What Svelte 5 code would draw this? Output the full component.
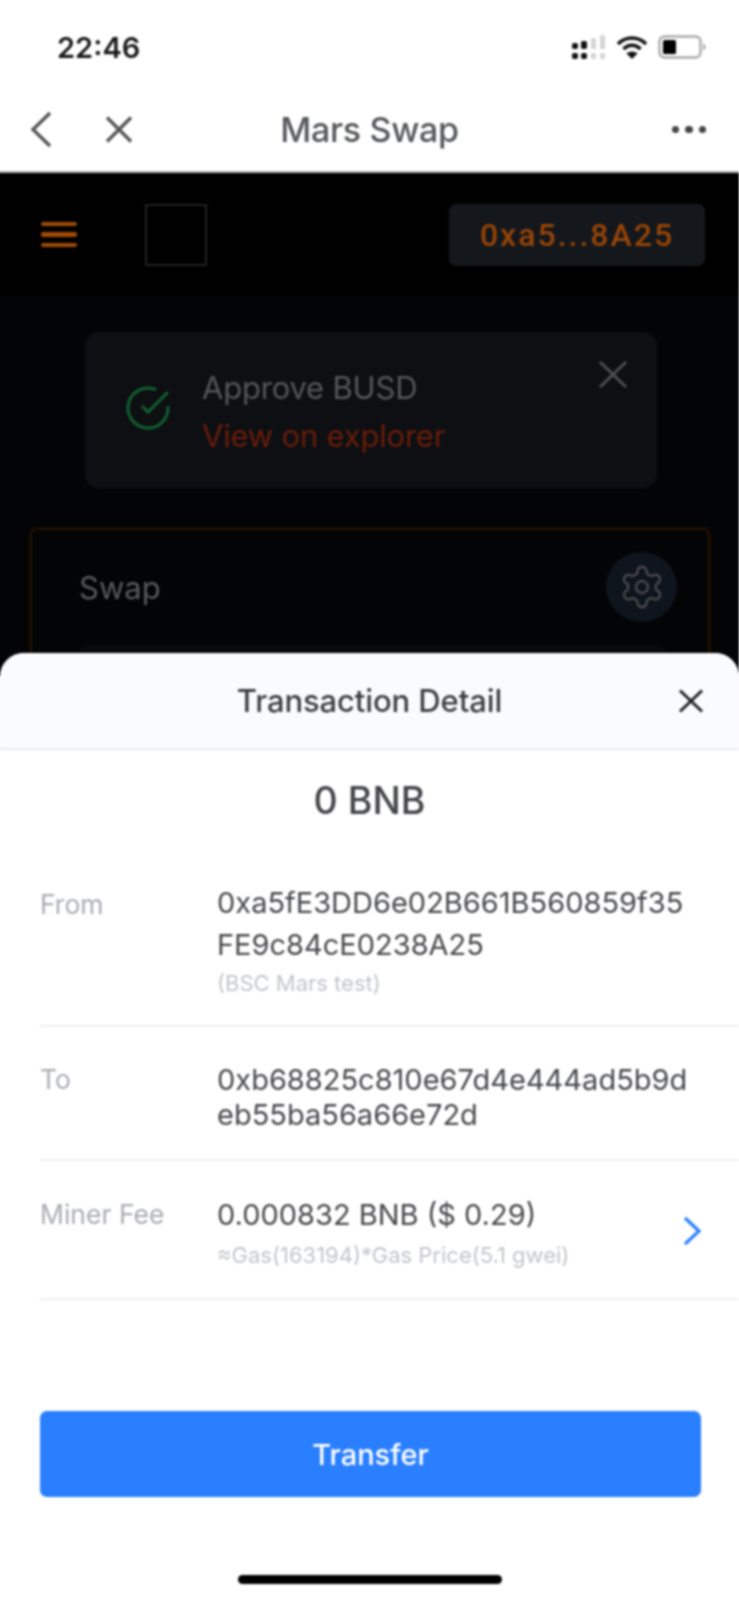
<script lang="ts">
const rows = [
  { label: 'To', lines: ['0xb68825c810e67d4e444ad5b9d', 'eb55ba56a66e72d'] },
];
</script>

<div class="phone">
  <header class="status">
    <span class="time">22:46</span>
    <div class="status-icons">
      <svg width="34" height="24" viewBox="0 0 34 24" aria-hidden="true">
        <g fill="#111">
          <rect x="0" y="8" width="6" height="6" rx="2" />
          <rect x="9" y="6" width="6" height="8" rx="2" />
          <rect x="0" y="18" width="6" height="6" rx="2" />
          <rect x="9" y="18" width="6" height="6" rx="2" />
        </g>
        <g fill="#d4d4d4">
          <rect x="19" y="3" width="5" height="11" rx="1.5" />
          <rect x="28" y="0" width="5" height="14" rx="1.5" />
          <rect x="19" y="18" width="5" height="6" rx="1.5" />
          <rect x="28" y="18" width="5" height="6" rx="1.5" />
        </g>
      </svg>
      <svg width="32" height="24" viewBox="0 0 32 24" aria-hidden="true">
        <g fill="none" stroke="#111" stroke-width="3.6">
          <path d="M2 9 C10 1 22 1 30 9" />
          <path d="M7.5 14 C12.5 9 19.5 9 24.5 14" />
        </g>
        <path d="M16 24 L10.5 18.5 C13.5 15.8 18.5 15.8 21.5 18.5 Z" fill="#111" />
      </svg>
      <svg width="48" height="24" viewBox="0 0 48 24" aria-hidden="true">
        <rect x="1.5" y="1.5" width="41" height="21" rx="5" fill="none" stroke="#aaa" stroke-width="2.4" />
        <rect x="5" y="5" width="13" height="14" rx="1.5" fill="#000" />
        <path d="M45 8.5 C47 9.5 47.5 10.5 47.5 12 C47.5 13.5 47 14.5 45 15.5 Z" fill="#aaa" />
      </svg>
    </div>
  </header>

  <nav class="nav">
    <div class="nav-left">
      <svg width="22" height="37" viewBox="0 0 22 37" aria-hidden="true">
        <path d="M20 2 L3 18.5 L20 35" fill="none" stroke="#555" stroke-width="3.4" />
      </svg>
      <svg width="28" height="27" viewBox="0 0 28 27" aria-hidden="true">
        <path d="M2 1.5 L26 25.5 M26 1.5 L2 25.5" fill="none" stroke="#555" stroke-width="3.4" />
      </svg>
    </div>
    <span class="nav-title">Mars Swap</span>
    <div class="dots"><i></i><i></i><i></i></div>
  </nav>

  <div class="appbar">
    <div class="burger"><i></i><i></i><i></i></div>
    <div class="logo-box"></div>
    <div class="address">0xa5...8A25</div>
  </div>

  <main class="page">
    <div class="toast">
      <svg class="check" width="48" height="48" viewBox="0 0 24 24" aria-hidden="true">
        <path d="M22 11.08V12a10 10 0 1 1-5.93-9.14" fill="none" stroke="#11602f" stroke-width="1.5" />
        <path d="M22 4 12 14.01 9 11.01" fill="none" stroke="#11602f" stroke-width="1.5" />
      </svg>
      <div class="toast-text">
        <div class="toast-title">Approve BUSD</div>
        <div class="toast-link">View on explorer</div>
      </div>
      <svg class="toast-close" width="30" height="29" viewBox="0 0 30 29" aria-hidden="true">
        <path d="M2 2 L28 27 M28 2 L2 27" fill="none" stroke="#4e4e4e" stroke-width="3" />
      </svg>
    </div>

    <section class="swap">
      <div class="swap-head">
        <span>Swap</span>
        <div class="gear">
          <svg width="48" height="48" viewBox="0 0 24 24" aria-hidden="true">
            <path d="M12.22 2h-.44a2 2 0 0 0-2 2v.18a2 2 0 0 1-1 1.73l-.43.25a2 2 0 0 1-2 0l-.15-.08a2 2 0 0 0-2.73.73l-.22.38a2 2 0 0 0 .73 2.73l.15.1a2 2 0 0 1 1 1.72v.51a2 2 0 0 1-1 1.74l-.15.09a2 2 0 0 0-.73 2.73l.22.38a2 2 0 0 0 2.73.73l.15-.08a2 2 0 0 1 2 0l.43.25a2 2 0 0 1 1 1.73V20a2 2 0 0 0 2 2h.44a2 2 0 0 0 2-2v-.18a2 2 0 0 1 1-1.73l.43-.25a2 2 0 0 1 2 0l.15.08a2 2 0 0 0 2.73-.73l.22-.39a2 2 0 0 0-.73-2.73l-.15-.08a2 2 0 0 1-1-1.74v-.5a2 2 0 0 1 1-1.74l.15-.09a2 2 0 0 0 .73-2.73l-.22-.38a2 2 0 0 0-2.73-.73l-.15.08a2 2 0 0 1-2 0l-.43-.25a2 2 0 0 1-1-1.73V4a2 2 0 0 0-2-2z" fill="none" stroke="#4a4a4c" stroke-width="1.2" />
            <circle cx="12" cy="12" r="3" fill="none" stroke="#4a4a4c" stroke-width="1.2" />
          </svg>
        </div>
      </div>
      <div class="swap-panel"></div>
    </section>
  </main>

  <aside class="sheet">
    <div class="sheet-head">
      <span>Transaction Detail</span>
      <svg class="sheet-close" width="26" height="24" viewBox="0 0 26 24" aria-hidden="true">
        <path d="M2 1.5 L24 22.5 M24 1.5 L2 22.5" fill="none" stroke="#222" stroke-width="3" />
      </svg>
    </div>

    <div class="amount">0 BNB</div>

    <div class="row row-from">
      <div class="label">From</div>
      <div class="value">
        <div>0xa5fE3DD6e02B661B560859f35</div>
        <div>FE9c84cE0238A25</div>
        <div class="sub">(BSC Mars test)</div>
      </div>
    </div>

    {#each rows as row}
      <div class="row row-to">
        <div class="label">{row.label}</div>
        <div class="value">
          {#each row.lines as line}
            <div>{line}</div>
          {/each}
        </div>
      </div>
    {/each}

    <div class="row row-fee">
      <div class="label">Miner Fee</div>
      <div class="value">
        <div>0.000832 BNB ($ 0.29)</div>
        <div class="sub">≈Gas(163194)*Gas Price(5.1 gwei)</div>
      </div>
      <svg class="more" width="20" height="30" viewBox="0 0 20 30" aria-hidden="true">
        <path d="M3 2 L17 15 L3 28" fill="none" stroke="#2a7fff" stroke-width="3.2" />
      </svg>
    </div>

    <button type="button" class="transfer">Transfer</button>
    <div class="home-bar"></div>
  </aside>
</div>

<style>
  :global(body) {
    margin: 0;
    background: #fff;
    overflow: hidden;
  }

  /* 4px wider than the window on the left so the blur doesn't fade the left edge */
  .phone {
    position: relative;
    width: 743px;
    height: 1600px;
    margin-left: -4px;
    overflow: hidden;
    background: #fff;
    font-family: Inter, "Noto Sans", sans-serif;
    filter: blur(0.9px);
  }

  .status {
    display: flex;
    align-items: center;
    justify-content: space-between;
    height: 88px;
    box-sizing: border-box;
    padding: 6px 33px 0 61px;
  }

  .time {
    font-size: 29px;
    font-weight: 600;
    color: #1a1a1a;
  }

  .status-icons {
    display: flex;
    align-items: center;
    gap: 10px;
  }

  .nav {
    position: relative;
    display: flex;
    align-items: center;
    justify-content: space-between;
    height: 85px;
    box-sizing: border-box;
    padding: 0 33px 0 34px;
    border-bottom: 2px solid #b4b4b4;
  }

  .nav-left {
    display: flex;
    align-items: center;
    gap: 53px;
  }

  .nav-title {
    position: absolute;
    left: 4px;
    right: 0;
    text-align: center;
    font-size: 34px;
    font-weight: 500;
    color: #55575a;
    letter-spacing: -0.3px;
  }

  .dots {
    display: flex;
    gap: 6px;
  }

  .dots i {
    width: 7.5px;
    height: 7.5px;
    border-radius: 50%;
    background: #444;
  }

  .appbar {
    display: flex;
    align-items: center;
    height: 123px;
    box-sizing: border-box;
    padding: 0 34px 0 45px;
    background: #000;
  }

  .burger {
    display: flex;
    flex-direction: column;
    gap: 6px;
    width: 36px;
  }

  .burger i {
    height: 4.5px;
    border-radius: 2px;
    background: #a04a08;
  }

  .logo-box {
    width: 58px;
    height: 58px;
    margin-left: 68px;
    border: 2px solid #222;
  }

  .address {
    display: flex;
    align-items: center;
    justify-content: center;
    width: 256px;
    height: 62px;
    margin-left: auto;
    border-radius: 7px;
    background: #14171c;
    color: #964406;
    font-family: Roboto, sans-serif;
    font-size: 32px;
    font-weight: 500;
    letter-spacing: 2px;
  }

  .page {
    height: 380px;
    overflow: hidden;
    box-sizing: border-box;
    padding: 36px 29px 0 34px;
    background: #030406;
  }

  .toast {
    position: relative;
    display: flex;
    align-items: flex-start;
    width: 572px;
    height: 156px;
    margin-left: 55px;
    box-sizing: border-box;
    padding: 32px 0 0 39px;
    border-radius: 14px;
    background: #0d0f13;
  }

  .check {
    margin-top: 20px;
  }

  .toast-text {
    margin-left: 30px;
    font-size: 31px;
    line-height: 48px;
    letter-spacing: -0.2px;
  }

  .toast-title {
    color: #55565a;
  }

  .toast-link {
    color: #6b1c08;
  }

  .toast-close {
    position: absolute;
    top: 28px;
    right: 29px;
  }

  .swap {
    height: 200px;
    margin-top: 40px;
    box-sizing: border-box;
    border: 2px solid #241104;
    border-radius: 7px;
    background: #030405;
    box-shadow: 0 0 4px #1f0f03;
  }

  .swap-head {
    display: flex;
    align-items: center;
    justify-content: space-between;
    padding: 22px 31px 0 47px;
    color: #58595c;
    font-size: 31px;
  }

  .gear {
    display: flex;
    align-items: center;
    justify-content: center;
    width: 71px;
    height: 70px;
    border-radius: 50%;
    background: #0f151d;
  }

  .swap-panel {
    height: 40px;
    margin: 23px 43px 0 48px;
    border-radius: 6px;
    background: #07090c;
  }

  .sheet {
    position: absolute;
    top: 653px;
    left: 4px;
    right: 0;
    bottom: 0;
    overflow: hidden;
    border-radius: 24px 24px 0 0;
    background: #fff;
  }

  .sheet-head {
    position: relative;
    display: flex;
    align-items: center;
    justify-content: center;
    height: 97px;
    box-sizing: border-box;
    border-bottom: 2px solid #e9ebee;
    background: #fafbfe;
    color: #3c3f44;
    font-size: 31px;
    font-weight: 500;
    letter-spacing: -0.1px;
  }

  .sheet-close {
    position: absolute;
    top: 36px;
    right: 35px;
  }

  .amount {
    margin-top: 27px;
    text-align: center;
    color: #444548;
    font-size: 37.5px;
    font-weight: 500;
    line-height: 48px;
  }

  .row {
    position: relative;
    display: flex;
    margin-left: 40px;
    border-bottom: 2px solid #eff0f2;
    box-sizing: border-box;
  }

  .label {
    width: 177px;
    flex: none;
    color: #a9acb2;
    font-size: 26.5px;
  }

  .value {
    color: #48494c;
    font-size: 29px;
  }

  .sub {
    color: #c3c5c9;
    font-size: 22px;
  }

  .row-from {
    height: 156px;
    margin-top: 46px;
    padding-top: 11px;
  }

  .row-from .label {
    line-height: 34px;
    margin-top: 5px;
  }

  .row-from .value {
    line-height: 42px;
  }

  .row-from .sub {
    line-height: 30px;
    margin-top: 2px;
  }

  .row-to {
    height: 134px;
    padding-top: 35px;
  }

  .row-to .label {
    line-height: 34px;
  }

  .row-to .value {
    line-height: 35px;
  }

  .row-fee {
    height: 139px;
    padding-top: 36px;
  }

  .row-fee .label {
    line-height: 34px;
  }

  .row-fee .value {
    line-height: 36px;
  }

  .row-fee .sub {
    line-height: 30px;
    margin-top: 7px;
  }

  .more {
    position: absolute;
    top: 55px;
    right: 37px;
  }

  .transfer {
    display: block;
    width: 661px;
    height: 86px;
    margin: 111px 0 0 40px;
    border: none;
    border-radius: 7px;
    background: #2a7fff;
    color: #fff;
    font-family: inherit;
    font-size: 29px;
    font-weight: 500;
  }

  .home-bar {
    width: 264px;
    height: 9px;
    margin: 78px auto 0;
    border-radius: 5px;
    background: #000;
  }
</style>
